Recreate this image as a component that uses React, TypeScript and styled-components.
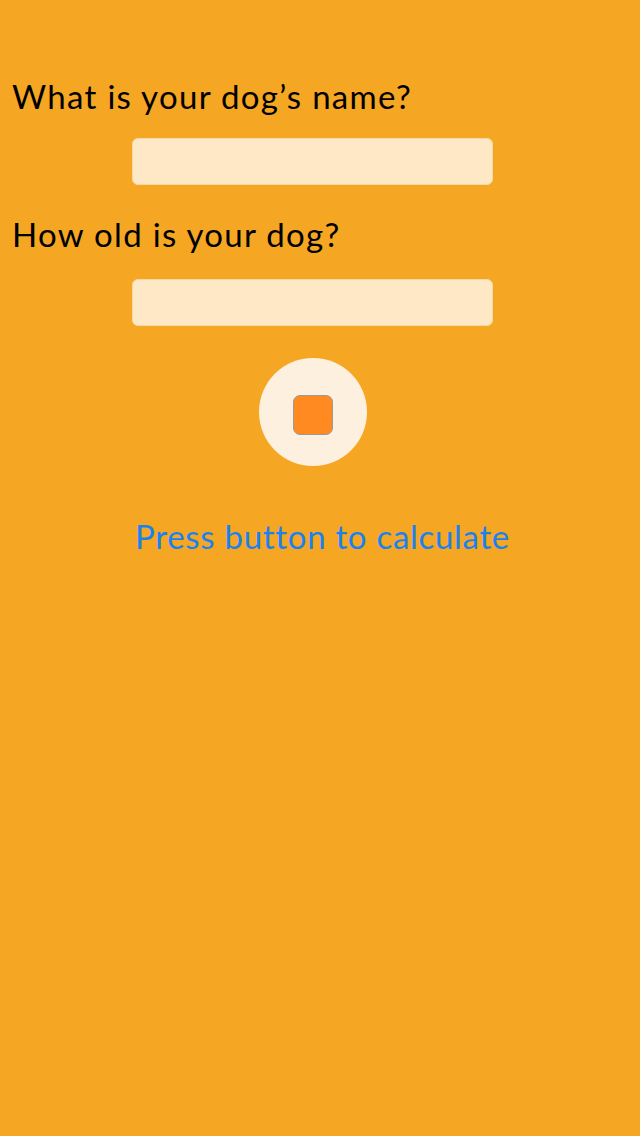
import React from 'react';
import styled, { createGlobalStyle } from 'styled-components';

const GlobalStyle = createGlobalStyle`
  html, body {
    margin: 0;
    padding: 0;
    background: #f5a623;
  }
  body {
    font-family: Lato, 'Noto Sans', sans-serif;
  }
`;

const Screen = styled.div`
  width: 640px;
  min-height: 1136px;
  background: #f5a623;
  display: flex;
  flex-direction: column;
  padding-top: 76px;
  box-sizing: border-box;
`;

const Question = styled.label<{ $top?: number }>`
  display: block;
  margin: ${(p) => p.$top ?? 0}px 0 0 12px;
  font-size: 33px;
  line-height: 40px;
  color: #000;
  letter-spacing: 1.3px;
`;

const Field = styled.input<{ $top: number }>`
  display: block;
  width: 361px;
  height: 47px;
  box-sizing: border-box;
  margin: ${(p) => p.$top}px 0 0 132px;
  border: 1px solid #f8d9a6;
  border-radius: 6px;
  background: #ffe8c6;
  outline: none;
`;

const CalcButton = styled.button`
  width: 108px;
  height: 108px;
  margin: 32px 0 0 259px;
  border: none;
  border-radius: 50%;
  background: #fdf0de;
  display: flex;
  align-items: center;
  justify-content: center;
  padding: 5px 0 0;
  cursor: pointer;
`;

const Stop = styled.span`
  width: 40px;
  height: 40px;
  box-sizing: border-box;
  border: 1px solid #9a9a9a;
  border-radius: 7px;
  background: #ff8a22;
`;

const Result = styled.div`
  margin: 50px 0 0 135px;
  font-size: 33px;
  line-height: 40px;
  color: #1a82f0;
  letter-spacing: 0.7px;
`;

export default function App() {
  return (
    <>
      <GlobalStyle />
      <Screen>
        <Question>What is your dog’s name?</Question>
        <Field $top={22} />
        <Question $top={29}>How old is your dog?</Question>
        <Field $top={25} />
        <CalcButton aria-label="Calculate">
          <Stop />
        </CalcButton>
        <Result>Press button to calculate</Result>
      </Screen>
    </>
  );
}
